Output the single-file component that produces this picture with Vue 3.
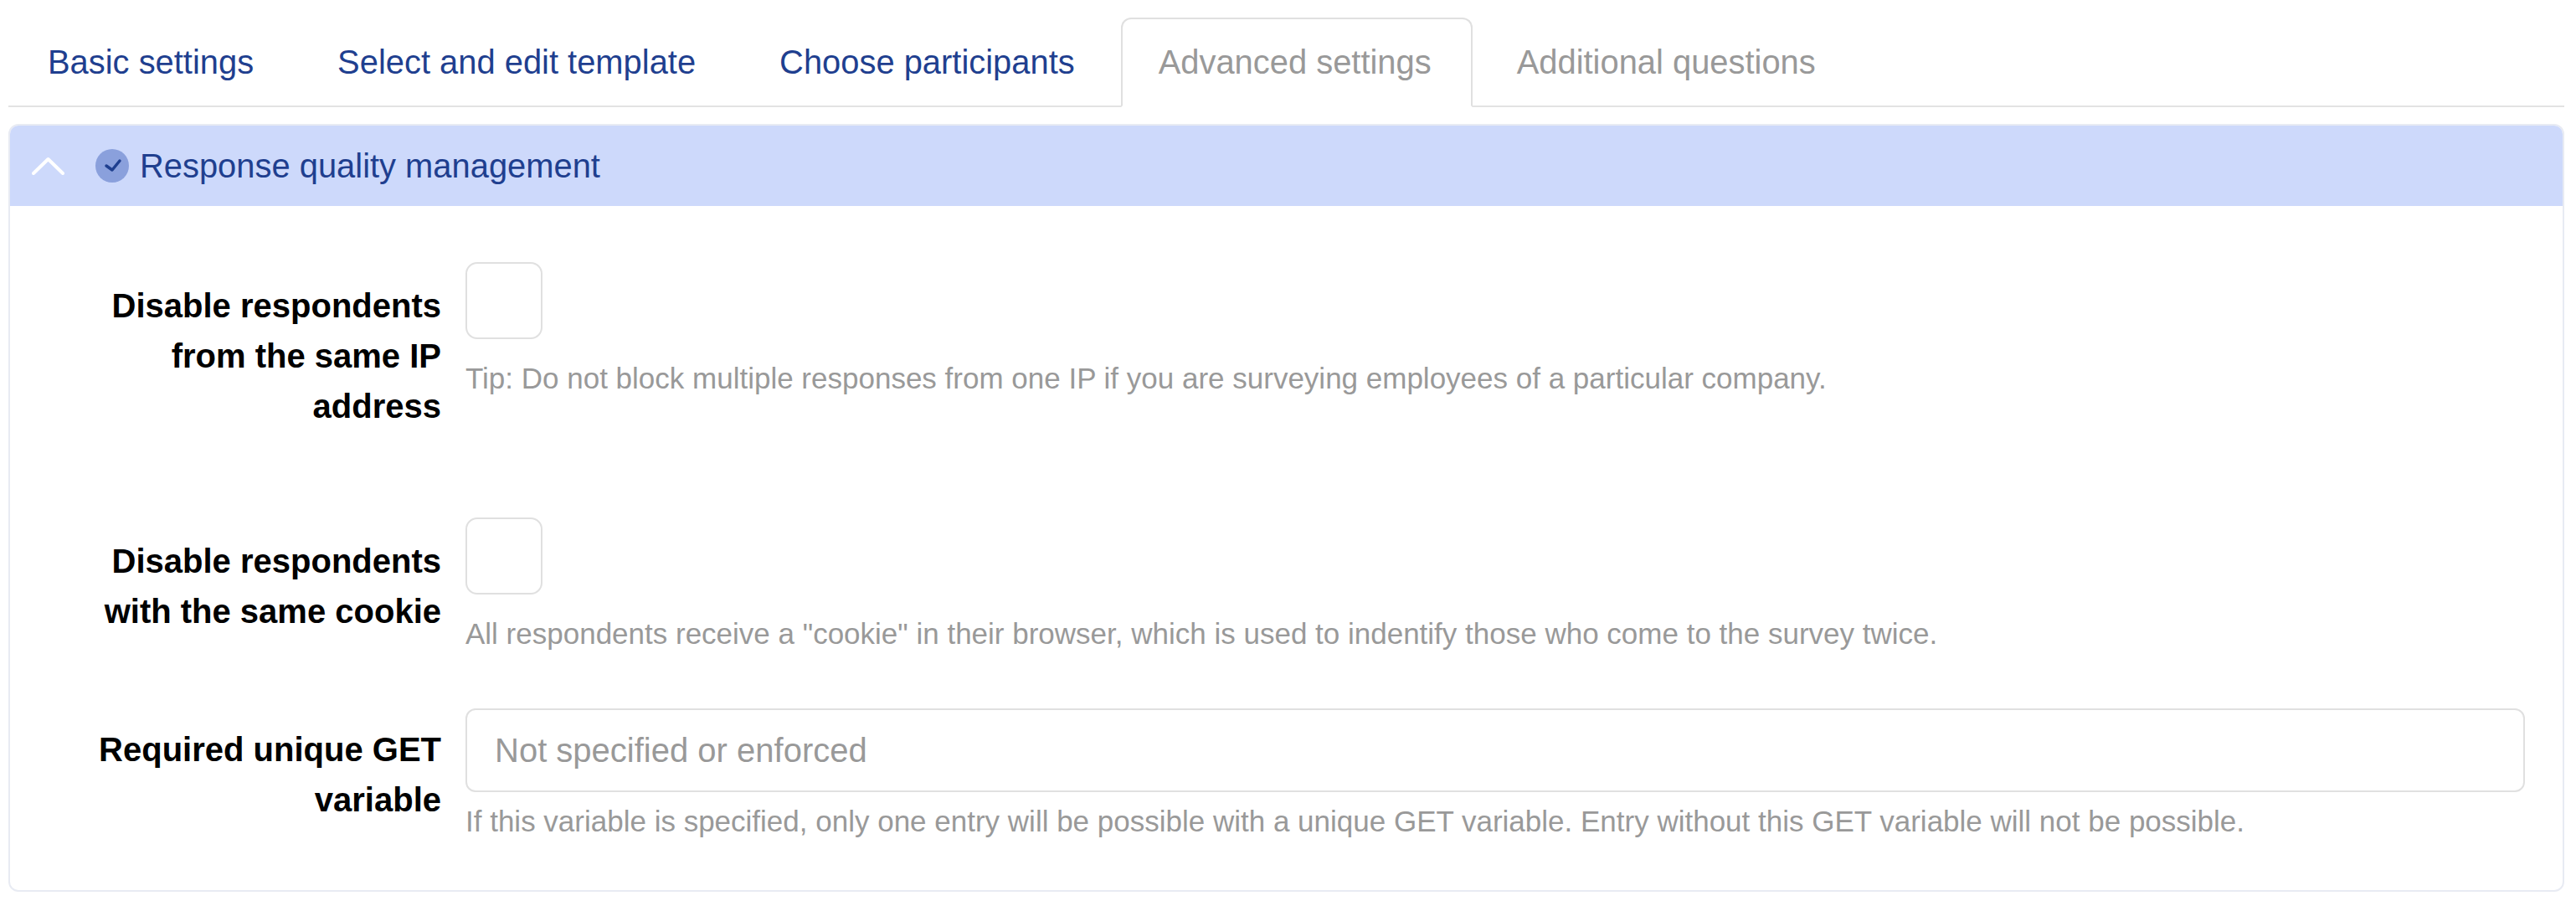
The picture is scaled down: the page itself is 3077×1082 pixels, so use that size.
<script setup>
const tabs = [
  { label: 'Basic settings', state: 'link' },
  { label: 'Select and edit template', state: 'link' },
  { label: 'Choose participants', state: 'link' },
  { label: 'Advanced settings', state: 'active' },
  { label: 'Additional questions', state: 'muted' }
]
</script>

<template>
  <div class="page">
    <ul class="tabs">
      <li v-for="tab in tabs" :key="tab.label" class="tab" :class="tab.state">{{ tab.label }}</li>
    </ul>

    <section class="panel">
      <header class="panel-head">
        <svg class="chevron" viewBox="0 0 39 22" fill="none">
          <path d="M2 20 L19.5 3 L37 20" stroke="#fff" stroke-width="4" stroke-linecap="round" stroke-linejoin="round" />
        </svg>
        <svg class="status" viewBox="0 0 40 40">
          <circle cx="20" cy="20" r="20" fill="#8aa0dc" />
          <path d="M13 20 L20 25 L29 14" fill="none" stroke="#1f3f8f" stroke-width="3.5" stroke-linecap="round" stroke-linejoin="round" />
        </svg>
        <span class="panel-title">Response quality management</span>
      </header>

      <div class="panel-body">
        <div class="row row-ip">
          <label class="row-label">Disable respondents from the same IP address</label>
          <div class="row-field">
            <input type="checkbox" class="check" />
            <p class="hint">Tip: Do not block multiple responses from one IP if you are surveying employees of a particular company.</p>
          </div>
        </div>

        <div class="row row-cookie">
          <label class="row-label">Disable respondents with the same cookie</label>
          <div class="row-field">
            <input type="checkbox" class="check" />
            <p class="hint">All respondents receive a "cookie" in their browser, which is used to indentify those who come to the survey twice.</p>
          </div>
        </div>

        <div class="row">
          <label class="row-label label-get">Required unique GET variable</label>
          <div class="row-field">
            <input type="text" class="text-input" placeholder="Not specified or enforced" />
            <p class="hint hint-get">If this variable is specified, only one entry will be possible with a unique GET variable. Entry without this GET variable will not be possible.</p>
          </div>
        </div>
      </div>
    </section>
  </div>
</template>

<style scoped>
.page {
  width: 3077px;
  height: 1082px;
  box-sizing: border-box;
  padding: 21px 14px 0 10px;
  background: #fff;
  font-family: "Liberation Sans", Arial, sans-serif;
  overflow: hidden;
}

.tabs {
  display: flex;
  margin: 0;
  padding: 0;
  list-style: none;
  height: 107px;
  border-bottom: 2px solid #e3e3e3;
  box-sizing: border-box;
}

.tab {
  height: 107px;
  box-sizing: border-box;
  padding: 0 47px;
  margin-right: 2px;
  border: 2px solid transparent;
  border-radius: 12px 12px 0 0;
  font-size: 39.9px;
  line-height: 102px;
  white-space: nowrap;
}

.tab:first-child {
  margin-left: -2px;
}

.link {
  color: #1f3f8f;
}

.muted {
  color: #999;
}

.active {
  color: #999;
  background: #fff;
  border-color: #e0e0e0 #e0e0e0 #fff;
  margin-left: 4px;
  margin-right: 4px;
  padding-left: 43px;
}

.panel {
  margin-top: 20px;
  height: 917px;
  box-sizing: border-box;
  border: 2px solid #e8ebf3;
  border-radius: 12px;
  overflow: hidden;
}

.panel-head {
  display: flex;
  align-items: center;
  height: 96px;
  background: #cdd9fb;
  padding-left: 26px;
}

.chevron {
  width: 39px;
  height: 22px;
  margin-right: 37px;
}

.status {
  width: 40px;
  height: 40px;
  margin-right: 13px;
}

.panel-title {
  color: #1f3f8f;
  font-size: 39.9px;
}

.panel-body {
  padding-top: 67px;
}

.row {
  display: flex;
  align-items: flex-start;
}

.row-ip {
  min-height: 305px;
}

.row-cookie {
  min-height: 228px;
}

.row-label {
  width: 515px;
  flex: none;
  box-sizing: border-box;
  padding-top: 22px;
  padding-left: 75px;
  text-align: right;
  color: #000;
  font-size: 40px;
  font-weight: 700;
  line-height: 60px;
}

.label-get {
  padding-top: 19px;
}

.row-field {
  flex: none;
  width: 2460px;
  margin-left: 29px;
}

.check {
  display: block;
  appearance: none;
  width: 92px;
  height: 92px;
  margin: 0;
  border: 2px solid #e0e0e0;
  border-radius: 14px;
  background: #fff;
}

.hint {
  margin: 25px 0 0;
  color: #999;
  font-size: 35px;
  line-height: 44px;
  white-space: nowrap;
}

.hint-get {
  margin-top: 13px;
}

.text-input {
  display: block;
  width: 100%;
  height: 100px;
  box-sizing: border-box;
  padding: 0 33px;
  border: 2px solid #e0e0e0;
  border-radius: 12px;
  background: #fff;
  font-family: "Liberation Sans", Arial, sans-serif;
  font-size: 40px;
  outline: none;
}

.text-input::placeholder {
  color: #999;
  opacity: 1;
}
</style>
